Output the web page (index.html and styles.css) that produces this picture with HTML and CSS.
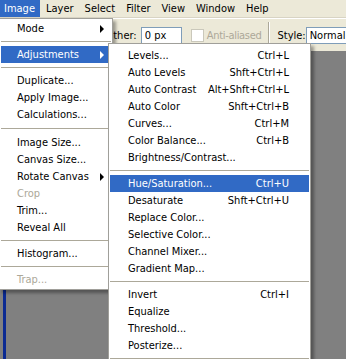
FILE: index.html
```html
<!DOCTYPE html>
<html>
<head>
    <title>Image menu - Adjustments</title>
    <link rel="stylesheet" href="styles.css">
</head>
<body>
<div class="app">
    <div class="menubar">
        <span class="menubar-item open">Image</span>
        <span class="menubar-item">Layer</span>
        <span class="menubar-item">Select</span>
        <span class="menubar-item">Filter</span>
        <span class="menubar-item">View</span>
        <span class="menubar-item">Window</span>
        <span class="menubar-item">Help</span>
    </div>

    <div class="options">
        <label class="field">Feather: <input class="text-input" type="text" value="0 px"></label>
        <label class="check"><input type="checkbox" disabled> Anti-aliased</label>
        <span class="divider"></span>
        <label class="field style-field">Style: <select class="select"><option>Normal</option></select></label>
    </div>

    <div class="workspace">
        <div class="doc"></div>
    </div>

    <!-- Image menu -->
    <div class="menu image-menu">
        <div class="item has-sub">Mode</div>
        <div class="sep"></div>
        <div class="item has-sub active">Adjustments</div>
        <div class="sep"></div>
        <div class="item">Duplicate...</div>
        <div class="item">Apply Image...</div>
        <div class="item">Calculations...</div>
        <div class="sep wide"></div>
        <div class="item">Image Size...</div>
        <div class="item">Canvas Size...</div>
        <div class="item has-sub">Rotate Canvas</div>
        <div class="item disabled">Crop</div>
        <div class="item">Trim...</div>
        <div class="item">Reveal All</div>
        <div class="sep"></div>
        <div class="item">Histogram...</div>
        <div class="sep"></div>
        <div class="item disabled">Trap...</div>
    </div>

    <!-- Adjustments submenu -->
    <div class="menu adjust-menu">
        <div class="item"><span class="label">Levels...</span><span class="key">Ctrl+L</span></div>
        <div class="item"><span class="label">Auto Levels</span><span class="key">Shft+Ctrl+L</span></div>
        <div class="item"><span class="label">Auto Contrast</span><span class="key">Alt+Shft+Ctrl+L</span></div>
        <div class="item"><span class="label">Auto Color</span><span class="key">Shft+Ctrl+B</span></div>
        <div class="item"><span class="label">Curves...</span><span class="key">Ctrl+M</span></div>
        <div class="item"><span class="label">Color Balance...</span><span class="key">Ctrl+B</span></div>
        <div class="item"><span class="label">Brightness/Contrast...</span></div>
        <div class="sep"></div>
        <div class="item active"><span class="label">Hue/Saturation...</span><span class="key">Ctrl+U</span></div>
        <div class="item"><span class="label">Desaturate</span><span class="key">Shft+Ctrl+U</span></div>
        <div class="item"><span class="label">Replace Color...</span></div>
        <div class="item"><span class="label">Selective Color...</span></div>
        <div class="item"><span class="label">Channel Mixer...</span></div>
        <div class="item"><span class="label">Gradient Map...</span></div>
        <div class="sep"></div>
        <div class="item"><span class="label">Invert</span><span class="key">Ctrl+I</span></div>
        <div class="item"><span class="label">Equalize</span></div>
        <div class="item"><span class="label">Threshold...</span></div>
        <div class="item"><span class="label">Posterize...</span></div>
        <div class="sep"></div>
    </div>
</div>
</body>
</html>
```

FILE: styles.css
```css
* {
    box-sizing: border-box;
}
body {
    margin: 0;
    background: #808080;
    font-family: "DejaVu Sans Condensed", "Liberation Sans", sans-serif;
    font-size: 11px;
    color: #000;
}
.app {
    position: relative;
    width: 346px;
    height: 359px;
    overflow: hidden;
    display: flex;
    flex-direction: column;
}

/* menu bar */
.menubar {
    display: flex;
    flex-shrink: 0;
    height: 18px;
    background: #ece9d8;
    border-bottom: 1px solid #d8d4c4;
}
.menubar-item {
    padding: 0 5px 0 6px;
    line-height: 17px;
}
.menubar-item:first-child {
    padding-left: 4px;
}
.menubar-item.open {
    background: #316ac5;
    color: #fff;
}

/* options bar */
.options {
    display: flex;
    flex-shrink: 0;
    align-items: center;
    height: 33px;
    padding-left: 96px;
    background: #ece9d8;
    border-top: 1px solid #fff;
    white-space: nowrap;
}
.field {
    display: flex;
    align-items: center;
    gap: 4px;
}
.style-field {
    gap: 0;
}
.text-input, .select {
    height: 17px;
    margin: 0;
    padding: 0 3px;
    border: 1px solid #7f9db9;
    border-radius: 0;
    background: #fff;
    font: inherit;
    color: #000;
    outline: none;
}
.text-input {
    width: 41px;
}
.select {
    appearance: none;
    width: 90px;
    flex-shrink: 0;
}
.check {
    display: flex;
    align-items: center;
    gap: 3px;
    margin-left: 9px;
    color: #aca899;
    letter-spacing: -0.3px;
}
.check input {
    appearance: none;
    width: 13px;
    height: 13px;
    margin: 0;
    border: 1px solid #cac8bb;
    background: #fff;
}
.divider {
    width: 2px;
    height: 26px;
    margin: 0 8px 0 6px;
    border-left: 1px solid #aca899;
    border-right: 1px solid #fff;
}

/* workspace */
.workspace {
    flex: 1;
    display: flex;
    padding: 12px 0 0 3px;
    background: #808080;
}
.doc {
    width: 300px;
    border-left: 3px solid #0b2a92;
}

/* dropdown menus */
.menu {
    position: absolute;
    background: #fff;
    border: 1px solid #a09f9a;
    padding: 1px;
    box-shadow: 3px 3px 3px rgba(0, 0, 0, 0.35);
}
.image-menu {
    left: -1px;
    top: 18px;
    width: 114px;
}
.adjust-menu {
    left: 108px;
    top: 43px;
    width: 203px;
    padding: 3px 1px;
}
.item {
    display: flex;
    align-items: center;
    height: 17px;
    padding: 0 7px 0 16px;
    white-space: nowrap;
}
.item.has-sub {
    justify-content: space-between;
}
.item.has-sub::after {
    content: "";
    border-style: solid;
    border-width: 4px 0 4px 4px;
    border-color: transparent transparent transparent currentColor;
}
.adjust-menu .item {
    padding: 0 20px 0 18px;
}
.label {
    flex: 1;
}
.item.active {
    background: #316ac5;
    color: #fff;
}
.item.disabled {
    color: #aca899;
}
.sep {
    height: 1px;
    margin: 4px 0;
    background: #aca899;
}
.sep.wide {
    margin: 5px 0;
}
```
